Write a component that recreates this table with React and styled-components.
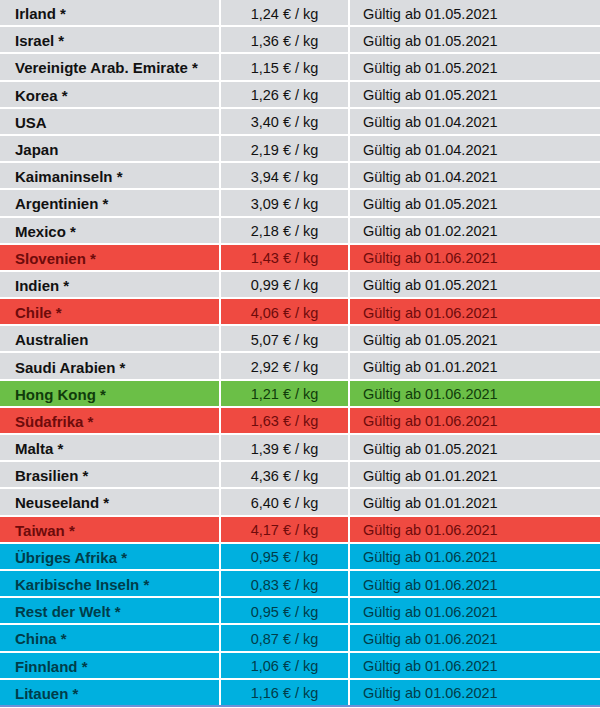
import React from "react";
import styled, { createGlobalStyle } from "styled-components";

const Global = createGlobalStyle`
  html, body { margin: 0; padding: 0; background: #ffffff; }
  body { font-family: "Liberation Sans", Arial, sans-serif; }
`;

const themes = {
  gray: { bg: "#dadcdf", fg: "#111111" },
  red: { bg: "#ef4a41", fg: "#6e0b0b" },
  green: { bg: "#6bbf47", fg: "#103c0b" },
  blue: { bg: "#00b0df", fg: "#003d4a" },
};

const Table = styled.div`
  width: 600px;
  display: flex;
  flex-direction: column;
  gap: 2px;
  background: #ffffff;
  border-bottom: 2px solid #6e8fd6;
`;

const Row = styled.div`
  display: grid;
  grid-template-columns: 219px 127px 1fr;
  column-gap: 2px;
  height: 25.2px;
`;

const Cell = styled.div`
  display: flex;
  align-items: center;
  padding-top: 2px;
  box-sizing: border-box;
  background: ${(p) => themes[p.$tone].bg};
  color: ${(p) => themes[p.$tone].fg};
  font-size: 14.5px;
  white-space: nowrap;
  overflow: hidden;
`;

const Country = styled(Cell)`
  font-weight: bold;
  font-size: 15px;
  padding-left: 15px;
`;

const Price = styled(Cell)`
  justify-content: center;
`;

const Valid = styled(Cell)`
  padding-left: 13px;
`;

const rows = [
  ["Irland *", "1,24", "01.05.2021", "gray"],
  ["Israel *", "1,36", "01.05.2021", "gray"],
  ["Vereinigte Arab. Emirate *", "1,15", "01.05.2021", "gray"],
  ["Korea *", "1,26", "01.05.2021", "gray"],
  ["USA", "3,40", "01.04.2021", "gray"],
  ["Japan", "2,19", "01.04.2021", "gray"],
  ["Kaimaninseln *", "3,94", "01.04.2021", "gray"],
  ["Argentinien *", "3,09", "01.05.2021", "gray"],
  ["Mexico *", "2,18", "01.02.2021", "gray"],
  ["Slovenien *", "1,43", "01.06.2021", "red"],
  ["Indien *", "0,99", "01.05.2021", "gray"],
  ["Chile *", "4,06", "01.06.2021", "red"],
  ["Australien", "5,07", "01.05.2021", "gray"],
  ["Saudi Arabien *", "2,92", "01.01.2021", "gray"],
  ["Hong Kong *", "1,21", "01.06.2021", "green"],
  ["Südafrika *", "1,63", "01.06.2021", "red"],
  ["Malta *", "1,39", "01.05.2021", "gray"],
  ["Brasilien *", "4,36", "01.01.2021", "gray"],
  ["Neuseeland *", "6,40", "01.01.2021", "gray"],
  ["Taiwan *", "4,17", "01.06.2021", "red"],
  ["Übriges Afrika *", "0,95", "01.06.2021", "blue"],
  ["Karibische Inseln *", "0,83", "01.06.2021", "blue"],
  ["Rest der Welt *", "0,95", "01.06.2021", "blue"],
  ["China *", "0,87", "01.06.2021", "blue"],
  ["Finnland *", "1,06", "01.06.2021", "blue"],
  ["Litauen *", "1,16", "01.06.2021", "blue"],
];

export default function App() {
  return (
    <>
      <Global />
      <Table>
        {rows.map(([country, price, date, tone]) => (
          <Row key={country}>
            <Country $tone={tone}>{country}</Country>
            <Price $tone={tone}>{price} € / kg</Price>
            <Valid $tone={tone}>Gültig ab {date}</Valid>
          </Row>
        ))}
      </Table>
    </>
  );
}
